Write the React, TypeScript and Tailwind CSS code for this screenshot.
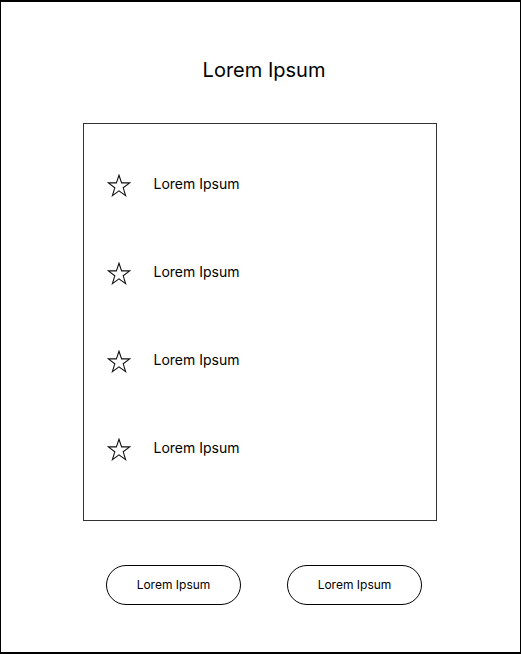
import React from 'react';

const Star: React.FC = () => (
  <svg width="24" height="24" viewBox="0 0 24 24" className="shrink-0 mt-[4px]">
    <polygon
      points="12,1.2 14.6,8.9 22.7,8.9 16.2,13.8 18.6,21.7 12,16.9 5.4,21.7 7.8,13.8 1.3,8.9 9.4,8.9"
      fill="none"
      stroke="#111"
      strokeWidth="1.1"
      strokeLinejoin="miter"
    />
  </svg>
);

const items = ['Lorem Ipsum', 'Lorem Ipsum', 'Lorem Ipsum', 'Lorem Ipsum'];

export default function App() {
  return (
    <div
      className="w-[521px] h-[654px] border-x border-y-2 border-black bg-white flex flex-col items-center text-black"
      style={{ fontFamily: 'Inter, "Noto Sans", sans-serif' }}
    >
      <h1 className="mt-[54px] ml-[7px] text-[20px] leading-[28px] font-normal">Lorem Ipsum</h1>

      <div className="mt-[39px] mr-[2px] w-[354px] h-[398px] border border-[#333] pt-[16px] pl-[23px]">
        {items.map((label, i) => (
          <div key={i} className="h-[88px] flex items-center gap-[23px]">
            <Star />
            <span className="text-[14px] leading-5">{label}</span>
          </div>
        ))}
      </div>

      <div className="mt-[44px] w-full flex pl-[105px] gap-[46px]">
        <button className="w-[135px] h-[40px] rounded-full border border-black text-[12px] flex items-center justify-center">
          Lorem Ipsum
        </button>
        <button className="w-[135px] h-[40px] rounded-full border border-black text-[12px] flex items-center justify-center">
          Lorem Ipsum
        </button>
      </div>
    </div>
  );
}
